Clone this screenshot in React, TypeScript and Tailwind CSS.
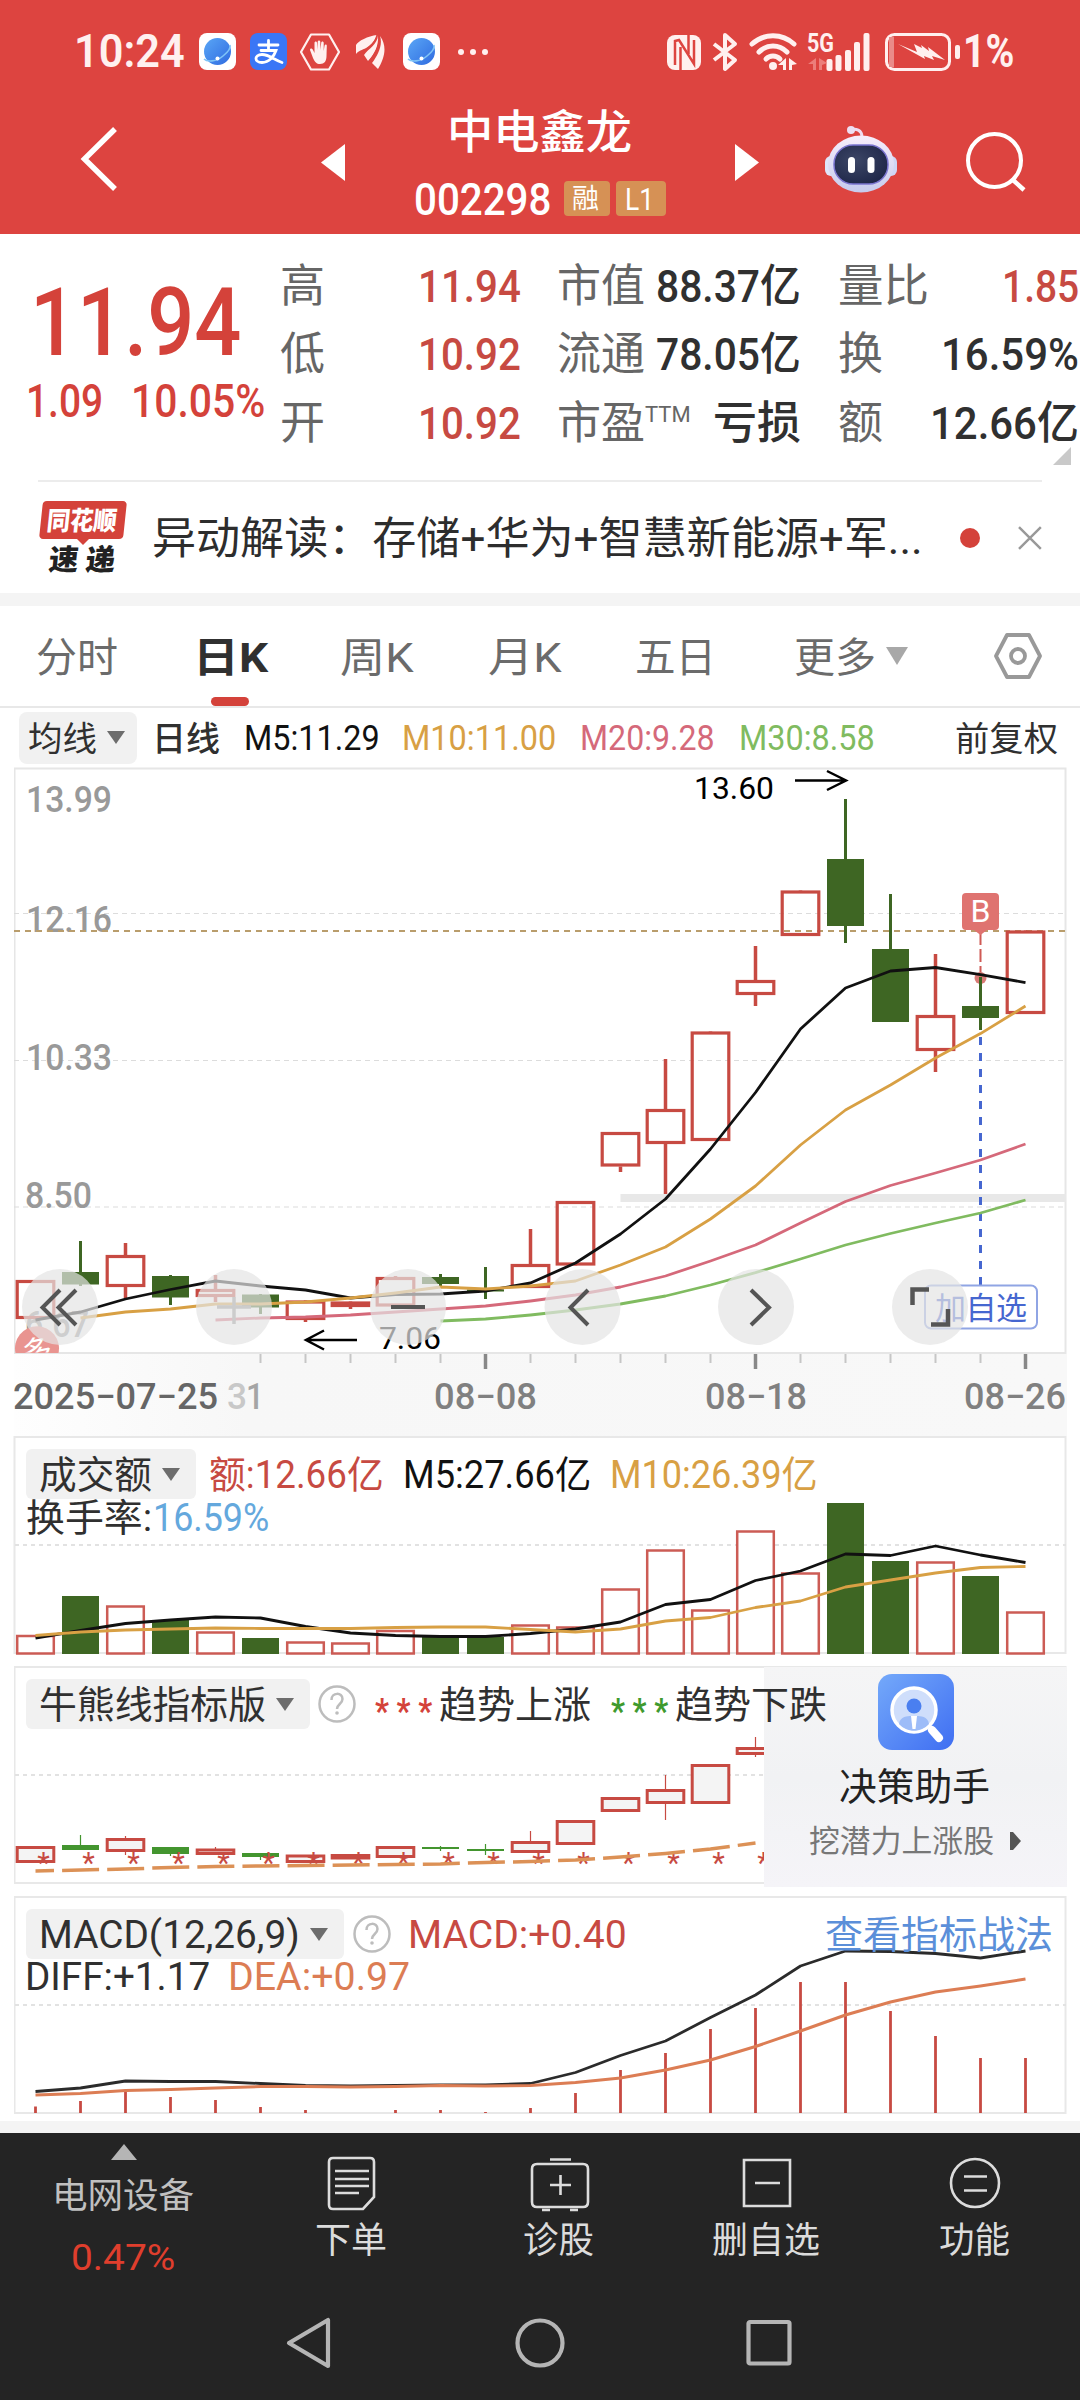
import { useLayoutEffect, useRef, useState, type ReactNode } from 'react'

const RED = '#c74a42'
const GREEN = '#3e6623'
const GOLD = '#d8a044'
const PINK = '#d5697a'
const LIME = '#80bb60'

interface FitProps {
  w: number
  className?: string
  children: ReactNode
}

// Condenses or widens a run of text so that it fills exactly w pixels
const Fit = ({ w, className = '', children }: FitProps) => {
  const ref = useRef<HTMLSpanElement>(null)
  const [scale, setScale] = useState(1)

  useLayoutEffect(() => {
    if (ref.current) setScale(w / ref.current.offsetWidth)
  }, [w])

  return (
    <span className={`inline-block shrink-0 leading-none ${className}`} style={{ width: w }}>
      <span
        ref={ref}
        className="inline-block origin-left whitespace-nowrap"
        style={{ transform: `translate(-1px, 1px) scaleX(${scale})` }}
      >
        {children}
      </span>
    </span>
  )
}

const GlobeIcon = () => (
  <svg viewBox="0 0 37 37" className="h-[37px] w-[37px]">
    <defs>
      <linearGradient id="globe" x1="0" y1="0" x2="1" y2="1">
        <stop offset="0" stopColor="#5aa6f6" />
        <stop offset="1" stopColor="#2f6be0" />
      </linearGradient>
    </defs>
    <rect width="37" height="37" rx="8" fill="#fff" />
    <circle cx="18.5" cy="18.5" r="13.5" fill="url(#globe)" />
    <path d="M5 26c3 3 12 3 19-3 5-4 8-8 7-11" fill="none" stroke="#7fc4f7" strokeWidth="1.6" />
    <circle cx="18.5" cy="25.5" r="2" fill="#fff" />
  </svg>
)

const StatusBar = () => (
  <div className="flex h-[103px] items-center pl-[75px] text-[#fff0ef]">
    <Fit w={111} className="-mt-[3px] text-[46px] font-semibold">10:24</Fit>
    <div className="ml-[13px] flex items-center">
      <GlobeIcon />
      <svg viewBox="0 0 37 37" className="ml-[14px] h-[37px] w-[37px]">
        <rect width="37" height="37" rx="8" fill="#3a76f6" />
        <g fill="none" stroke="#fff" strokeWidth="2.8" strokeLinecap="round">
          <path d="M9 12h19M18.500 7.500v9M11 17.500h15c-2 6-7 12-14 12-8 0-8-8 0-8 7 0 12 5 20 8" />
        </g>
      </svg>
      <svg viewBox="0 0 42 38" className="ml-[12px] h-[38px] w-[42px]">
        <path d="M12 1.500h18L40 19 30 36.500H12L2 19z" fill="none" stroke="currentColor" strokeWidth="2.2" strokeLinejoin="round" />
        <path d="M14 25l-3-8c0-2 2-2 3 0l1.500 3V10c0-2 2.500-2 2.500 0v7l.7-8c0-2 2.600-2 2.600 0v8l.9-7c0-2 2.500-2 2.500 0v8l.8-5c.3-2 2.500-2 2.300 0l-.3 10c0 5-2 8-6.500 8-3.500 0-5-2-7-6z" fill="currentColor" />
      </svg>
      <svg viewBox="0 0 30 36" className="ml-[15px] h-[36px] w-[30px]">
        <g fill="currentColor">
          <path d="M21 1C12 2 2 7 0 11v9c5-6 15-4 21-19z" />
          <path d="M22 1c0 9-10 14-14 20l4 6C18 21 23 12 22 1z" />
          <path d="M24 2c3 9-2 19-8 27l6 6c6-10 10-22 2-33z" />
        </g>
        <path d="M21 1C19 12 9 14 7 20M23 1c2 10-4 18-10 27" fill="none" stroke="#dd4440" strokeWidth="1.300" />
      </svg>
      <div className="ml-[17px]"><GlobeIcon /></div>
      <div className="ml-[18px] flex gap-[6px]">
        <i className="h-[6px] w-[6px] rounded-full bg-[#fff0ef]" />
        <i className="h-[6px] w-[6px] rounded-full bg-[#fff0ef]" />
        <i className="h-[6px] w-[6px] rounded-full bg-[#fff0ef]" />
      </div>
    </div>
    <svg viewBox="0 0 300 38" className="ml-[178px] h-[38px] w-[300px] overflow-visible">
      <g fill="currentColor">
        <rect x="1" y="2" width="34" height="35" rx="8" />
        <rect x="160.500" y="26" width="6" height="12" rx="2" />
        <rect x="169.500" y="22" width="6" height="16" rx="2" />
        <rect x="179" y="17" width="6" height="21" rx="2" />
        <rect x="188" y="9" width="6" height="29" rx="2" />
        <rect x="197.500" y="0" width="6" height="38" rx="2" />
        <rect x="289" y="12" width="5" height="14" rx="2" />
        <circle cx="107" cy="33" r="4" />
        <path d="M120 25v12h-3v-5h-5zM123 25l8 6-5 1v5h-3z" />
        <path d="M232 11l19 8-3-8 8 4-1-3 8 6-1-4 17 13-13-4 2 4-10-4 1 3z" />
      </g>
      <path d="M9 32V8l4-1 15 24V7" fill="none" stroke="#dd4440" strokeWidth="2.500" />
      <path d="M14.500 37V14M22.500 2v19" stroke="#dd4440" strokeWidth="2.500" />
      <path d="M48 11l21 16-10 9V2l10 9-21 16" fill="none" stroke="currentColor" strokeWidth="4" strokeLinejoin="round" />
      <g fill="none" stroke="currentColor" strokeWidth="5" strokeLinecap="round">
        <path d="M86 11c12-11 30-11 42 0" />
        <path d="M93 19c8-8 20-8 28 0" />
        <path d="M100 26c4-4 10-4 14 0" />
      </g>
      <path d="M150 25v12h-3v-6h-5zM153 25l8 5-5 2v5h-3z" fill="#ec7e7b" />
      <text x="141" y="19" fontSize="25" fontWeight="700" fill="currentColor" textLength="27" lengthAdjust="spacingAndGlyphs">5G</text>
      <rect x="220.500" y="1.500" width="63" height="35" rx="8" fill="none" stroke="currentColor" strokeWidth="3" />
      <path d="M223 4h5v30h-5z" fill="#ea8b88" />
    </svg>
    <Fit w={51} className="-mt-[3px] -ml-[2px] text-[46px] font-bold">1%</Fit>
  </div>
)

const Robot = () => (
  <svg viewBox="0 0 72 68" className="h-[68px] w-[72px]">
    <defs>
      <linearGradient id="shell" x1="0" y1="0" x2="0" y2="1">
        <stop offset="0" stopColor="#f7eefb" />
        <stop offset="1" stopColor="#c6cbed" />
      </linearGradient>
      <radialGradient id="visor" cx=".4" cy=".4" r=".7">
        <stop offset="0" stopColor="#3c4666" />
        <stop offset="1" stopColor="#1d2547" />
      </radialGradient>
    </defs>
    <path d="M25 5c6-2 12 0 12 7" fill="none" stroke="#f0dcf0" strokeWidth="3" />
    <circle cx="26" cy="5" r="4" fill="#eddff2" />
    <rect x="0" y="31" width="12" height="20" rx="6" fill="#dfe5fa" />
    <rect x="60" y="31" width="12" height="20" rx="6" fill="#cfd6f5" />
    <ellipse cx="36" cy="39" rx="33" ry="28.500" fill="url(#shell)" />
    <rect x="9" y="20" width="54" height="39" rx="19" fill="url(#visor)" stroke="#7a74cf" strokeWidth="1.500" />
    <rect x="23" y="32" width="7" height="16" rx="3.500" fill="#fff" />
    <rect x="42.500" y="32" width="7" height="16" rx="3.500" fill="#fff" />
  </svg>
)

const TitleBar = () => (
  <div className="flex h-[131px] items-start pt-[1px] pl-[78px]">
    <svg viewBox="0 0 42 66" className="mt-[22px] h-[66px] w-[42px]">
      <path d="M37 3L6.500 33 37 63" fill="none" stroke="#fff" strokeWidth="5.500" />
    </svg>
    <svg viewBox="0 0 24 37" className="mt-[40px] ml-[201px] h-[37px] w-[24px]">
      <path d="M24 0v37L0 18.500z" fill="#fff" />
    </svg>
    <div className="flex w-[390px] flex-col items-center text-white">
      <Fit w={185} className="mt-[4px] text-[46px] font-medium">中电鑫龙</Fit>
      <div className="mt-[24px] flex h-[40px] items-center">
        <Fit w={137} className="text-[45px] font-medium">002298</Fit>
        <div className="ml-[12px] flex h-[35px] w-[46px] items-center justify-center rounded-[4px] bg-[#d69155]">
          <Fit w={27} className="text-[27px]">融</Fit>
        </div>
        <div className="ml-[6px] flex h-[35px] w-[50px] items-center justify-center rounded-[4px] bg-[#d69155]">
          <Fit w={29} className="text-[31px]">L1</Fit>
        </div>
      </div>
    </div>
    <svg viewBox="0 0 24 37" className="mt-[40px] h-[37px] w-[24px]">
      <path d="M0 0v37l24-18.500z" fill="#fff" />
    </svg>
    <div className="mt-[21px] ml-[66px]"><Robot /></div>
    <svg viewBox="0 0 62 62" className="mt-[26px] ml-[67px] h-[62px] w-[62px]">
      <circle cx="30.500" cy="30.500" r="26.500" fill="none" stroke="#fff" strokeWidth="4" />
      <path d="M49 50l11 10" stroke="#fff" strokeWidth="4.500" />
    </svg>
  </div>
)

const quoteRows = [
  { a: '高', av: '11.94', b: '市值', bv: '88.37亿', bw: 145, c: '量比', cw: 91, cv: '1.85', cvw: 77, hot: true },
  { a: '低', av: '10.92', b: '流通', bv: '78.05亿', bw: 145, c: '换', cw: 45, cv: '16.59%', cvw: 138, hot: false },
  { a: '开', av: '10.92', b: '市盈', bv: '亏损', bw: 88, c: '额', cw: 45, cv: '12.66亿', cvw: 149, hot: false },
]

const Quote = () => (
  <div className="relative flex h-[246px] overflow-hidden">
    <div className="flex w-[282px] flex-col text-[#d4423a]">
      <Fit w={211} className="mt-[40px] ml-[31px] text-[95px] font-medium">11.94</Fit>
      <div className="mt-[8px] flex items-center pl-[27px] text-[46px]">
        <Fit w={77} className="font-medium">1.09</Fit>
        <Fit w={134} className="ml-[28px] font-medium">10.05%</Fit>
      </div>
    </div>
    <div className="flex flex-1 flex-col pt-[17px]">
      {quoteRows.map(r => (
        <div key={r.a} className="flex h-[68.5px] items-center text-[45px] text-[#666]">
          <Fit w={45}>{r.a}</Fit>
          <Fit w={103} className="ml-[93px] font-medium text-[#c74a42]">{r.av}</Fit>
          <Fit w={88} className="ml-[36px]">{r.b}</Fit>
          <div className="flex w-[156px] items-center justify-end">
            {r.b === '市盈' && <Fit w={46} className="mt-[-16px] mr-auto text-[22px]">TTM</Fit>}
            <Fit w={r.bw} className="font-medium text-[#303030]">{r.bv}</Fit>
          </div>
          <div className="ml-[37px] flex w-[241px] items-center justify-between">
            <Fit w={r.cw}>{r.c}</Fit>
            <Fit w={r.cvw} className={r.hot ? 'font-medium text-[#c74a42]' : 'font-medium text-[#303030]'}>{r.cv}</Fit>
          </div>
        </div>
      ))}
    </div>
    <svg viewBox="0 0 18 18" className="absolute right-[9px] bottom-[15px] h-[18px] w-[18px]">
      <path d="M18 0v18H0z" fill="#c9c9c9" />
    </svg>
  </div>
)

const NewsRow = () => (
  <div className="mx-[38px] flex h-[113px] items-center border-t-2 border-[#ececec]">
    <div className="flex w-[90px] flex-col items-center">
      <div className="flex h-[38px] w-[84px] -skew-x-6 items-center justify-center rounded-[4px] bg-[#d4423a] text-white">
        <Fit w={70} className="text-[26px] font-black">同花顺</Fit>
      </div>
      <svg viewBox="0 0 12 6" className="h-[6px] w-[12px]"><path d="M0 0h12L6 6z" fill="#d4423a" /></svg>
      <Fit w={66} className="-skew-x-6 text-[29px] font-black text-[#222]">速 递</Fit>
    </div>
    <Fit w={771} className="ml-[26px] text-[44px] text-[#2d2d2d]">异动解读：存储+华为+智慧新能源+军...</Fit>
    <i className="ml-[36px] h-[20px] w-[20px] rounded-full bg-[#d4423a]" />
    <svg viewBox="0 0 24 24" className="ml-[38px] h-[24px] w-[24px]">
      <path d="M1 1l22 22M23 1L1 23" stroke="#999" strokeWidth="2.500" />
    </svg>
  </div>
)

const Tabs = () => (
  <div className="flex h-[102px] items-center border-b-2 border-[#e8e8e8] pl-[37px] text-[41px] text-[#6b6b6b]">
    <Fit w={82} className="mt-[2px]">分时</Fit>
    <div className="relative ml-[75px] flex h-full items-center">
      <Fit w={75} className="mt-[2px] font-bold text-[#303030]">日K</Fit>
      <i className="absolute bottom-0 left-[17px] h-[9px] w-[38px] rounded-[5px] bg-[#d4423a]" />
    </div>
    <Fit w={74} className="mt-[2px] ml-[72px]">周K</Fit>
    <Fit w={74} className="mt-[2px] ml-[74px]">月K</Fit>
    <Fit w={81} className="mt-[2px] ml-[73px]">五日</Fit>
    <Fit w={82} className="mt-[2px] ml-[78px]">更多</Fit>
    <svg viewBox="0 0 22 18" className="ml-[9px] h-[18px] w-[22px]"><path d="M0 0h22L11 18z" fill="#a8a8a8" /></svg>
    <svg viewBox="0 0 48 46" className="ml-[86px] h-[46px] w-[48px]">
      <path d="M13 2h22l11 21-11 21H13L2 23z" fill="none" stroke="#999" strokeWidth="3.800" strokeLinejoin="round" />
      <circle cx="24" cy="23" r="7" fill="none" stroke="#999" strokeWidth="3.800" />
    </svg>
  </div>
)

const Caret = () => (
  <svg viewBox="0 0 18 13" className="h-[13px] w-[18px]"><path d="M0 0h18L9 13z" fill="#6d6d6d" /></svg>
)

const AverageRow = () => (
  <div className="flex h-[59px] items-center pl-[19px] text-[35px]">
    <div className="flex h-[52px] w-[118px] items-center justify-between rounded-[8px] bg-[#f1f1f1] pr-[12px] pl-[10px] text-[34px]">
      <Fit w={69} className="text-[#303030]">均线</Fit>
      <Caret />
    </div>
    <Fit w={68} className="ml-[16px] text-[34px] font-medium text-[#303030]">日线</Fit>
    <Fit w={136} className="ml-[24px] text-[#111]">M5:11.29</Fit>
    <Fit w={154} className="ml-[22px] text-[#d8a044]">M10:11.00</Fit>
    <Fit w={135} className="ml-[24px] text-[#d5697a]">M20:9.28</Fit>
    <Fit w={136} className="ml-[24px] text-[#80bb60]">M30:8.58</Fit>
    <Fit w={103} className="ml-[80px] text-[34px] text-[#303030]">前复权</Fit>
  </div>
)

const cx = (i: number) => 35.5 + 45 * i

const line = (values: number[], start = 0) =>
  values.map((y, k) => `${cx(start + k)},${y}`).join(' ')

// [up, bodyTop, bodyBottom, high, low]
type Candle = [number, number, number, number, number]

const candles: Candle[] = [
  [1, 1280, 1319, 1280, 1319],
  [0, 1272, 1284.5, 1241, 1286],
  [1, 1255, 1287, 1243, 1298],
  [0, 1276, 1297.5, 1275, 1305],
  [1, 1289, 1297, 1275, 1302],
  [0, 1294.5, 1307.5, 1294, 1314],
  [1, 1300.5, 1320, 1300, 1322],
  [1, 1301.5, 1307, 1301, 1309],
  [1, 1277, 1306.5, 1276, 1307],
  [0, 1277, 1284, 1274, 1287],
  [0, 1289.5, 1291.5, 1267, 1299],
  [1, 1264, 1288, 1229, 1288],
  [1, 1201, 1265.5, 1201, 1265],
  [1, 1132, 1166.5, 1132, 1172],
  [1, 1109, 1144, 1059, 1194],
  [1, 1031.5, 1141, 1032, 1141],
  [1, 980, 995, 946, 1006],
  [1, 890.5, 936, 891, 936],
  [0, 859, 926, 799, 943],
  [0, 949, 1022, 894, 1022],
  [1, 1015, 1051, 954, 1072],
  [0, 1006, 1018, 977, 1030],
  [1, 930.5, 1014, 931, 1014],
]

const ma5 = [1320, 1312, 1299, 1289.5, 1281, 1286, 1290, 1298, 1294.5, 1294, 1291, 1283, 1263, 1234, 1199, 1149, 1092.5, 1029, 988, 971, 967.5, 974.6, 982.6]
const ma10 = [1318, 1312, 1309, 1304, 1304, 1302, 1298, 1293, 1287, 1289, 1286, 1281, 1265, 1247, 1219, 1186, 1145, 1110, 1085, 1058, 1033.6, 1006]
const ma20 = [1320, 1318, 1317, 1315, 1312, 1309, 1306, 1301, 1295, 1287, 1276, 1261, 1245, 1223, 1201.5, 1185.5, 1173, 1160, 1144]
const ma30 = [1321, 1319, 1315, 1310, 1304, 1296, 1285, 1272.6, 1259, 1245, 1233.5, 1223, 1213, 1200]

const priceLabels = [
  { text: '13.99', x: 26, y: 812, w: 86 },
  { text: '12.16', x: 26, y: 932, w: 86 },
  { text: '10.33', x: 26, y: 1070, w: 86 },
  { text: '8.50', x: 25, y: 1208, w: 67 },
  { text: '6.67', x: 25, y: 1337, w: 64 },
]

const buttons = [60, 234, 408, 582.5, 756, 930]

const PriceChart = () => (
  <svg viewBox="14 767 1053 587" className="mx-[14px] h-[587px] w-[1053px]">
    <rect x="14.5" y="768.5" width="1051" height="584.5" fill="#fff" stroke="#e6e6e6" strokeWidth="2" />
    {[913.5, 1060.5, 1207].map(y => (
      <path key={y} d={`M14 ${y}H1066`} stroke="#dcdcdc" strokeWidth="1.200" strokeDasharray="5 4" />
    ))}
    <path d="M620.500 1198H1066" stroke="#e8e8e8" strokeWidth="8" />
    {priceLabels.map(l => (
      <text key={l.text} x={l.x} y={l.y} fontSize="37" fontWeight="500" fill="#999" textLength={l.w} lengthAdjust="spacingAndGlyphs">{l.text}</text>
    ))}
    <path d="M14 931H1066" stroke="#b99d6c" strokeWidth="1.800" strokeDasharray="6 5" />
    <path d="M980.500 932V975" stroke="#cf5a55" strokeWidth="2" strokeDasharray="13 4" />
    <circle cx="980.5" cy="978" r="6" fill="#d97b76" />
    {candles.map(([up, top, bottom, high, low], i) => up ? (
      <g key={i} stroke={RED} fill="none">
        <path d={`M${cx(i)} ${high}V${top}M${cx(i)} ${bottom}V${low}`} strokeWidth="3.500" />
        <rect x={cx(i) - 18.3} y={top + 1.5} width="36.6" height={bottom - top - 3} strokeWidth="3.200" />
      </g>
    ) : (
      <g key={i} fill={GREEN}>
        <rect x={cx(i) - 1.5} y={high} width="3" height={low - high} />
        <rect x={cx(i) - 18.5} y={top} width="37" height={bottom - top} />
      </g>
    ))}
    <g fill="none" strokeWidth="2.800" strokeLinejoin="round">
      <path d="M980.500 1037V1286" stroke="#4667d0" strokeWidth="3" strokeDasharray="8 8" />
      <polyline points={line(ma30, 9)} stroke={LIME} />
      <polyline points={line(ma20, 4)} stroke={PINK} />
      <polyline points={line(ma5)} stroke="#111" />
      <polyline points={line(ma10, 1)} stroke={GOLD} />
    </g>
    <rect x="962" y="893" width="37" height="37" rx="4" fill="#df7370" />
    <path d="M974 930h13l-6.500 5z" fill="#df7370" />
    <text x="980.500" y="922" fontSize="32" fill="#fff" textAnchor="middle">B</text>
    <g fill="none" stroke="#000" strokeWidth="2.500">
      <path d="M795 780.500h50M827 771l19 9.500-19 9.500" />
      <path d="M357 1340h-50M324 1330.500l-18 9.500 18 9.500" />
    </g>
    <text x="694" y="799" fontSize="32" textLength="80" lengthAdjust="spacingAndGlyphs">13.60</text>
    <text x="379" y="1349" fontSize="32" textLength="62">7.06</text>
    <rect x="925" y="1285.500" width="112" height="43" rx="6" fill="#fff" stroke="#90a5e4" strokeWidth="2" />
    <text x="935" y="1319" fontSize="31" fill="#4667d0" textLength="92">加自选</text>
    <path d="M15.500 1353a22 22 0 1 1 43 0z" fill="#e99490" />
    <svg x="14" y="1330" width="50" height="22.500">
      <text x="8" y="32" fontSize="30" fill="#fff" transform="rotate(-12 23 22)">多</text>
    </svg>
    {buttons.map(x => (
      <circle key={x} cx={x} cy="1307" r="38" fill="#e4e4e4" fillOpacity=".7" />
    ))}
    <path d="M217 1307h34M234 1297v27" stroke="#ccc" strokeWidth="3.500" />
    <g fill="none" stroke="#555" strokeWidth="4">
      <path d="M60 1290l-17.500 17.500L60 1325M76 1290l-17.500 17.500L76 1325" />
      <path d="M391 1307h34" />
      <path d="M588 1290l-17.500 17.500L588 1325M751 1290l18 17.500-18 17.500" />
      <path d="M912.500 1305v-15.500H929M948 1309v15.500H931" strokeWidth="4.500" />
    </g>
  </svg>
)

const dates = [
  { text: '2025−07−25', x: 13, w: 205, fill: '#666' },
  { text: '3', x: 227, w: 20, fill: '#c8c8c8' },
  { text: '1', x: 246, w: 18, fill: '#a5a5a5' },
  { text: '08−08', x: 434, w: 103, fill: '#808080' },
  { text: '08−18', x: 705, w: 102, fill: '#808080' },
  { text: '08−26', x: 964, w: 102, fill: '#808080' },
]

const DateAxis = () => (
  <svg viewBox="14 1354 1053 82" className="mx-[14px] h-[82px] w-[1053px]">
    <defs>
      <linearGradient id="axis" x1="0" x2="1">
        <stop offset="0" stopColor="#fefefe" />
        <stop offset=".22" stopColor="#f7f7f7" />
        <stop offset="1" stopColor="#f8f8f8" />
      </linearGradient>
    </defs>
    <rect x="14" y="1354" width="1053" height="90" fill="url(#axis)" />
    {candles.slice(5).map((_, k) => {
      const i = k + 5
      return [10, 16, 22].includes(i)
        ? <path key={i} d={`M${cx(i)} 1354v15`} stroke="#888" strokeWidth="3.500" />
        : <path key={i} d={`M${cx(i)} 1354v9`} stroke="#c6c6c6" strokeWidth="2" />
    })}
    {dates.map(d => (
      <text key={d.x} x={d.x} y="1409" fontSize="36" fontWeight="500" fill={d.fill} textLength={d.w} lengthAdjust="spacingAndGlyphs">{d.text}</text>
    ))}
  </svg>
)

const Dotted = ({ y }: { y: number }) => (
  <path d={`M15 ${y}H1066`} stroke="#e2e2e2" strokeWidth="2" strokeDasharray="4 4" />
)

const HelpIcon = () => (
  <svg viewBox="0 0 38 38" className="h-[38px] w-[38px]">
    <circle cx="19" cy="19" r="17.500" fill="none" stroke="#bdbdbd" strokeWidth="2.500" />
    <path d="M13.500 15c0-8 11-8 11-1 0 5-5.500 5-5.500 10" fill="none" stroke="#bdbdbd" strokeWidth="2.500" />
    <circle cx="19" cy="28" r="1.800" fill="#bdbdbd" />
  </svg>
)

interface PickerProps {
  w: number
  textWidth: number
  label: string
}

const Picker = ({ textWidth, w, label }: PickerProps) => (
  <div
    className="flex h-[50px] items-center justify-between rounded-[6px] bg-[#f1f1f1] pr-[16px] pl-[14px] text-[#303030]"
    style={{ width: w }}
  >
    <Fit w={textWidth}>{label}</Fit>
    <Caret />
  </div>
)

const volumes: [number, number][] = [
  [1, 1635], [0, 1596], [1, 1605.5], [0, 1620], [1, 1631.5], [0, 1638], [1, 1641.5], [1, 1642.5],
  [1, 1630], [0, 1637], [0, 1637], [1, 1624.5], [1, 1626.5], [1, 1588.5], [1, 1549.5], [1, 1609.5],
  [1, 1530.5], [1, 1572.5], [0, 1503], [0, 1561], [1, 1561.5], [0, 1576], [1, 1611.5],
]
const vol5 = [1638, 1630.5, 1623.5, 1620, 1617, 1618, 1626.5, 1633, 1635.5, 1636.5, 1636.5, 1633.5, 1629, 1622, 1604.5, 1599.5, 1580.5, 1571, 1554, 1555.5, 1546, 1555, 1562.5]
const vol10 = [1635.5, 1632, 1630, 1629, 1628, 1628.5, 1628.5, 1628.5, 1627.5, 1627, 1627, 1629.5, 1632, 1629, 1621, 1617.5, 1607.5, 1601, 1587, 1580, 1573, 1567.5, 1566.5]

const VolumePanel = () => (
  <div className="relative mx-[14px] h-[218px] w-[1053px]">
    <svg viewBox="14 1436 1053 218" className="absolute inset-0 h-full w-full overflow-visible">
      <rect x="14.500" y="1437" width="1051" height="216" fill="#fff" stroke="#e8e8e8" strokeWidth="2" />
      <Dotted y={1545} />
      {volumes.map(([up, top], i) => up
        ? <rect key={i} x={cx(i) - 18.3} y={top + 1} width="36.600" height={1652.5 - top} fill="#fff" stroke={RED} strokeOpacity=".9" strokeWidth="2.500" />
        : <rect key={i} x={cx(i) - 18.5} y={top} width="37" height={1654 - top} fill={GREEN} />)}
      <g fill="none" strokeWidth="2.800" strokeLinejoin="round">
        <polyline points={line(vol5)} stroke="#111" />
        <polyline points={line(vol10)} stroke={GOLD} />
      </g>
    </svg>
    <div className="relative flex items-center pt-[13px] pl-[12px] text-[38px]">
      <Picker w={170} textWidth={113} label="成交额" />
      <Fit w={175} className="ml-[14px] text-[#c74a42]">额:12.66亿</Fit>
      <Fit w={188} className="ml-[19px] text-[#111]">M5:27.66亿</Fit>
      <Fit w={208} className="ml-[19px] text-[#d8a044]">M10:26.39亿</Fit>
    </div>
    <div className="relative -mt-[1px] flex items-center pl-[13px] text-[38px]">
      <Fit w={126} className="text-[#303030]">换手率:</Fit>
      <Fit w={116} className="ml-[1px] text-[#64a8dd]">16.59%</Fit>
    </div>
  </div>
)

const trend: Candle[] = [
  [1, 1846.5, 1862.5, 1847, 1862],
  [0, 1845, 1850, 1835, 1850],
  [1, 1838.5, 1851.5, 1836, 1855],
  [0, 1847, 1854, 1847, 1856],
  [1, 1849, 1854.5, 1847, 1855],
  [0, 1853, 1857, 1853, 1860],
  [1, 1855, 1862.5, 1855, 1862],
  [1, 1854.5, 1859, 1854, 1859],
  [1, 1846.5, 1857.5, 1847, 1857],
  [0, 1847, 1849, 1846, 1851],
  [0, 1849, 1851, 1844, 1855],
  [1, 1841.5, 1852.5, 1831, 1852],
  [1, 1820.5, 1844.5, 1821, 1844],
  [1, 1797.5, 1811.5, 1798, 1812],
  [1, 1789.5, 1803.5, 1775, 1820],
  [1, 1764.5, 1803.5, 1765, 1803],
  [1, 1747.5, 1754.5, 1737, 1757],
]
const bull = [1871, 1870, 1869, 1867.5, 1866.5, 1866, 1865.5, 1865, 1864.5, 1864, 1862.5, 1861.5, 1860, 1857, 1853.5, 1849, 1843]

const Assistant = () => (
  <div className="absolute top-[1px] right-0 bottom-[-3px] flex w-[303px] flex-col items-center bg-linear-to-b from-[#f5f5f6] via-[#f1f2f4] to-[#f5f4f8]">
    <svg viewBox="0 0 76 76" className="mt-[7px] h-[76px] w-[76px]">
      <defs>
        <linearGradient id="helper" x1="0" y1="0" x2="1" y2="1">
          <stop offset="0" stopColor="#74a9fa" />
          <stop offset="1" stopColor="#3f6ef2" />
        </linearGradient>
      </defs>
      <rect width="76" height="76" rx="14" fill="url(#helper)" />
      <circle cx="36" cy="36" r="22" fill="#cfdefb" stroke="#fff" strokeWidth="3.500" />
      <circle cx="36" cy="32" r="7.500" fill="#4a7ff0" />
      <path d="M21 50c1-8 9-8 12-8l3 4 3-4c3 0 11 0 12 8-8 9-22 9-30 0z" fill="#9dbcf8" />
      <path d="M33 42h6l-1.500 13h-3z" fill="#fff" />
      <path d="M54 56l7 8" stroke="#fff" strokeWidth="8" strokeLinecap="round" />
    </svg>
    <Fit w={151} className="mt-[17px] text-[38px] text-[#222]">决策助手</Fit>
    <div className="mt-[20px] flex items-center gap-[15px]">
      <Fit w={185} className="text-[31px] text-[#777]">挖潜力上涨股</Fit>
      <svg viewBox="0 0 11 18" className="h-[18px] w-[11px]"><path d="M0 0h3l8 9-8 9H0z" fill="#555" /></svg>
    </div>
  </div>
)

const TrendPanel = () => (
  <div className="relative mx-[14px] mt-[12px] h-[218px] w-[1053px]">
    <svg viewBox="14 1666 1053 218" className="absolute inset-0 h-full w-full">
      <rect x="14.500" y="1667" width="1051" height="216" fill="#fff" stroke="#e8e8e8" strokeWidth="2" />
      <Dotted y={1775} />
      {trend.map(([up, top, bottom, high, low], i) => (
        <g key={i} stroke={up ? RED : '#43952f'} fill={up ? '#f4f4f4' : '#43952f'}>
          <path d={`M${cx(i)} ${high}V${low}`} strokeWidth="1.200" />
          {up
            ? <rect x={cx(i) - 18.3} y={top + 1} width="36.600" height={bottom - top - 2} strokeWidth="3" />
            : <rect x={cx(i) - 18.5} y={top} width="37" height={bottom - top} stroke="none" />}
        </g>
      ))}
      {trend.map((_, i) => (
        <text key={i} x={cx(i) + 8} y="1873" fontSize="29" fill={RED} textAnchor="middle">*</text>
      ))}
      <polyline points={line(bull)} fill="none" stroke="#dc9156" strokeWidth="3.500" strokeDasharray="37 8.100" strokeDashoffset="18.500" />
    </svg>
    <Assistant />
    <div className="relative flex items-center pt-[13px] pl-[12px] text-[38px]">
      <Picker w={284} textWidth={227} label="牛熊线指标版" />
      <div className="ml-[8px]"><HelpIcon /></div>
      <Fit w={57} className="mt-[12px] ml-[20px] text-[35px] font-bold text-[#d4423a]">* * *</Fit>
      <Fit w={152} className="ml-[7px] text-[#303030]">趋势上涨</Fit>
      <Fit w={57} className="mt-[12px] ml-[20px] text-[35px] font-bold text-[#3f9a2e]">* * *</Fit>
      <Fit w={152} className="ml-[7px] text-[#303030]">趋势下跌</Fit>
    </div>
  </div>
)

const macdBars = [2106.5, 2101, 2092, 2097, 2100, 2107, 2110, 2113, 2110, 2110, 2112, 2108, 2093, 2070, 2053, 2029, 2008, 1982, 1982, 2011, 2036, 2058, 2058]
const diff = [2091.5, 2088, 2081, 2081.5, 2081.5, 2083.5, 2085.5, 2086, 2085.5, 2085, 2085, 2083.5, 2072.5, 2055.5, 2041, 2017.5, 1995, 1966, 1951, 1951.5, 1953.5, 1958, 1951]
const dea = [2095, 2093.5, 2090.5, 2089.5, 2088, 2086.5, 2086.5, 2087, 2086.5, 2085.5, 2086, 2085.5, 2082.5, 2078, 2070, 2060, 2046.5, 2031, 2015, 2002, 1992, 1986, 1979]

const MacdPanel = () => (
  <div className="relative mx-[14px] mt-[12px] h-[218px] w-[1053px]">
    <svg viewBox="14 1896 1053 218" className="absolute inset-0 h-full w-full">
      <rect x="14.500" y="1897" width="1051" height="216" fill="#fff" stroke="#e8e8e8" strokeWidth="2" />
      <Dotted y={2005} />
      {macdBars.map((top, i) => (
        <path key={i} d={`M${cx(i)} ${top}V2113`} stroke={RED} strokeWidth="2.800" />
      ))}
      <g fill="none" strokeLinejoin="round">
        <polyline points={line(diff)} stroke="#2b2b2b" strokeWidth="2.800" />
        <polyline points={line(dea)} stroke="#dc7d54" strokeWidth="3" />
      </g>
    </svg>
    <div className="relative flex items-center pt-[13px] pl-[12px] text-[38px]">
      <Picker w={318} textWidth={261} label="MACD(12,26,9)" />
      <div className="ml-[9px]"><HelpIcon /></div>
      <Fit w={219} className="ml-[18px] text-[#c74a42]">MACD:+0.40</Fit>
      <Fit w={228} className="ml-[198px] text-[#5b8fd9]">查看指标战法</Fit>
    </div>
    <div className="relative -mt-[2px] flex items-center pl-[12px] text-[38px]">
      <Fit w={185} className="text-[#303030]">DIFF:+1.17</Fit>
      <Fit w={182} className="ml-[18px] text-[#dc7d54]">DEA:+0.97</Fit>
    </div>
  </div>
)

const navItems = [
  {
    label: '下单', w: 72, col: 'w-[208px]',
    icon: <path d="M7 3h37q4 0 4 4v35l-11 12H7q-4 0-4-4V7q0-4 4-4zM9 16h34M9 24h34M9 31h34M9 38h24" />,
  },
  {
    label: '诊股', w: 71, col: 'w-[207px]',
    icon: <path d="M3 9h46q5 0 5 5v33q0 5-5 5H3q-5 0-5-5V14q0-5 5-5zM16 4.500h21M26.500 20v20M16 30h21M8 55h8M36 55h8" />,
  },
  {
    label: '删自选', w: 108, col: 'w-[208px]',
    icon: <path d="M3 5h46v46H3zM14 28h25" />,
  },
  {
    label: '功能', w: 71, col: 'w-[208px]',
    icon: <path d="M26 4a24 24 0 1 1 0 48 24 24 0 1 1 0-48zM15 21.500h23M15 35.500h23" />,
  },
]

const BottomNav = () => (
  <div className="flex h-[160px] text-[36px]">
    <div className="flex w-[248px] flex-col items-center pt-[11px] text-[#c0c0c0]">
      <svg viewBox="0 0 26 16" className="h-[16px] w-[26px]"><path d="M13 0l13 16H0z" fill="#b5b5b5" /></svg>
      <Fit w={142} className="mt-[18px] text-[35px]">电网设备</Fit>
      <Fit w={104} className="mt-[25px] text-[37px] text-[#df3e2d]">0.47%</Fit>
    </div>
    {navItems.map(n => (
      <div key={n.label} className={`flex flex-col items-center pt-[22px] text-[#dcdcdc] ${n.col}`}>
        <svg viewBox="-4 0 60 58" className="h-[58px] w-[60px]" fill="none" stroke="#dcdcdc" strokeWidth="2.600">{n.icon}</svg>
        <Fit w={n.w} className="mt-[9px]">{n.label}</Fit>
      </div>
    ))}
  </div>
)

const SystemNav = () => (
  <div className="flex h-[107px] items-start pt-[23px] pl-[285px]">
    <svg viewBox="0 0 48 54" className="h-[54px] w-[48px]">
      <path d="M43 4v46L4 27z" fill="none" stroke="#b5b5b5" strokeWidth="4.200" strokeLinejoin="round" />
    </svg>
    <svg viewBox="0 0 54 54" className="ml-[180px] h-[54px] w-[54px]">
      <circle cx="27" cy="27" r="22.500" fill="none" stroke="#b5b5b5" strokeWidth="4.200" />
    </svg>
    <svg viewBox="0 0 54 54" className="ml-[175px] h-[54px] w-[54px]">
      <rect x="6.500" y="6" width="41" height="41.500" rx="1.500" fill="none" stroke="#b5b5b5" strokeWidth="4.200" />
    </svg>
  </div>
)

export default function App() {
  return (
    <div className="flex h-[2400px] w-[1080px] flex-col overflow-hidden bg-white font-[Roboto,'Noto_Sans_CJK_SC',sans-serif]">
      <header className="h-[234px] bg-[#dd4440]">
        <StatusBar />
        <TitleBar />
      </header>
      <Quote />
      <NewsRow />
      <div className="h-[13px] bg-[#f4f4f4]" />
      <Tabs />
      <AverageRow />
      <PriceChart />
      <DateAxis />
      <VolumePanel />
      <TrendPanel />
      <MacdPanel />
      <div className="mt-[7px] h-[12px] bg-[#f4f4f4]" />
      <footer className="bg-[#242424]">
        <BottomNav />
        <SystemNav />
      </footer>
    </div>
  )
}
